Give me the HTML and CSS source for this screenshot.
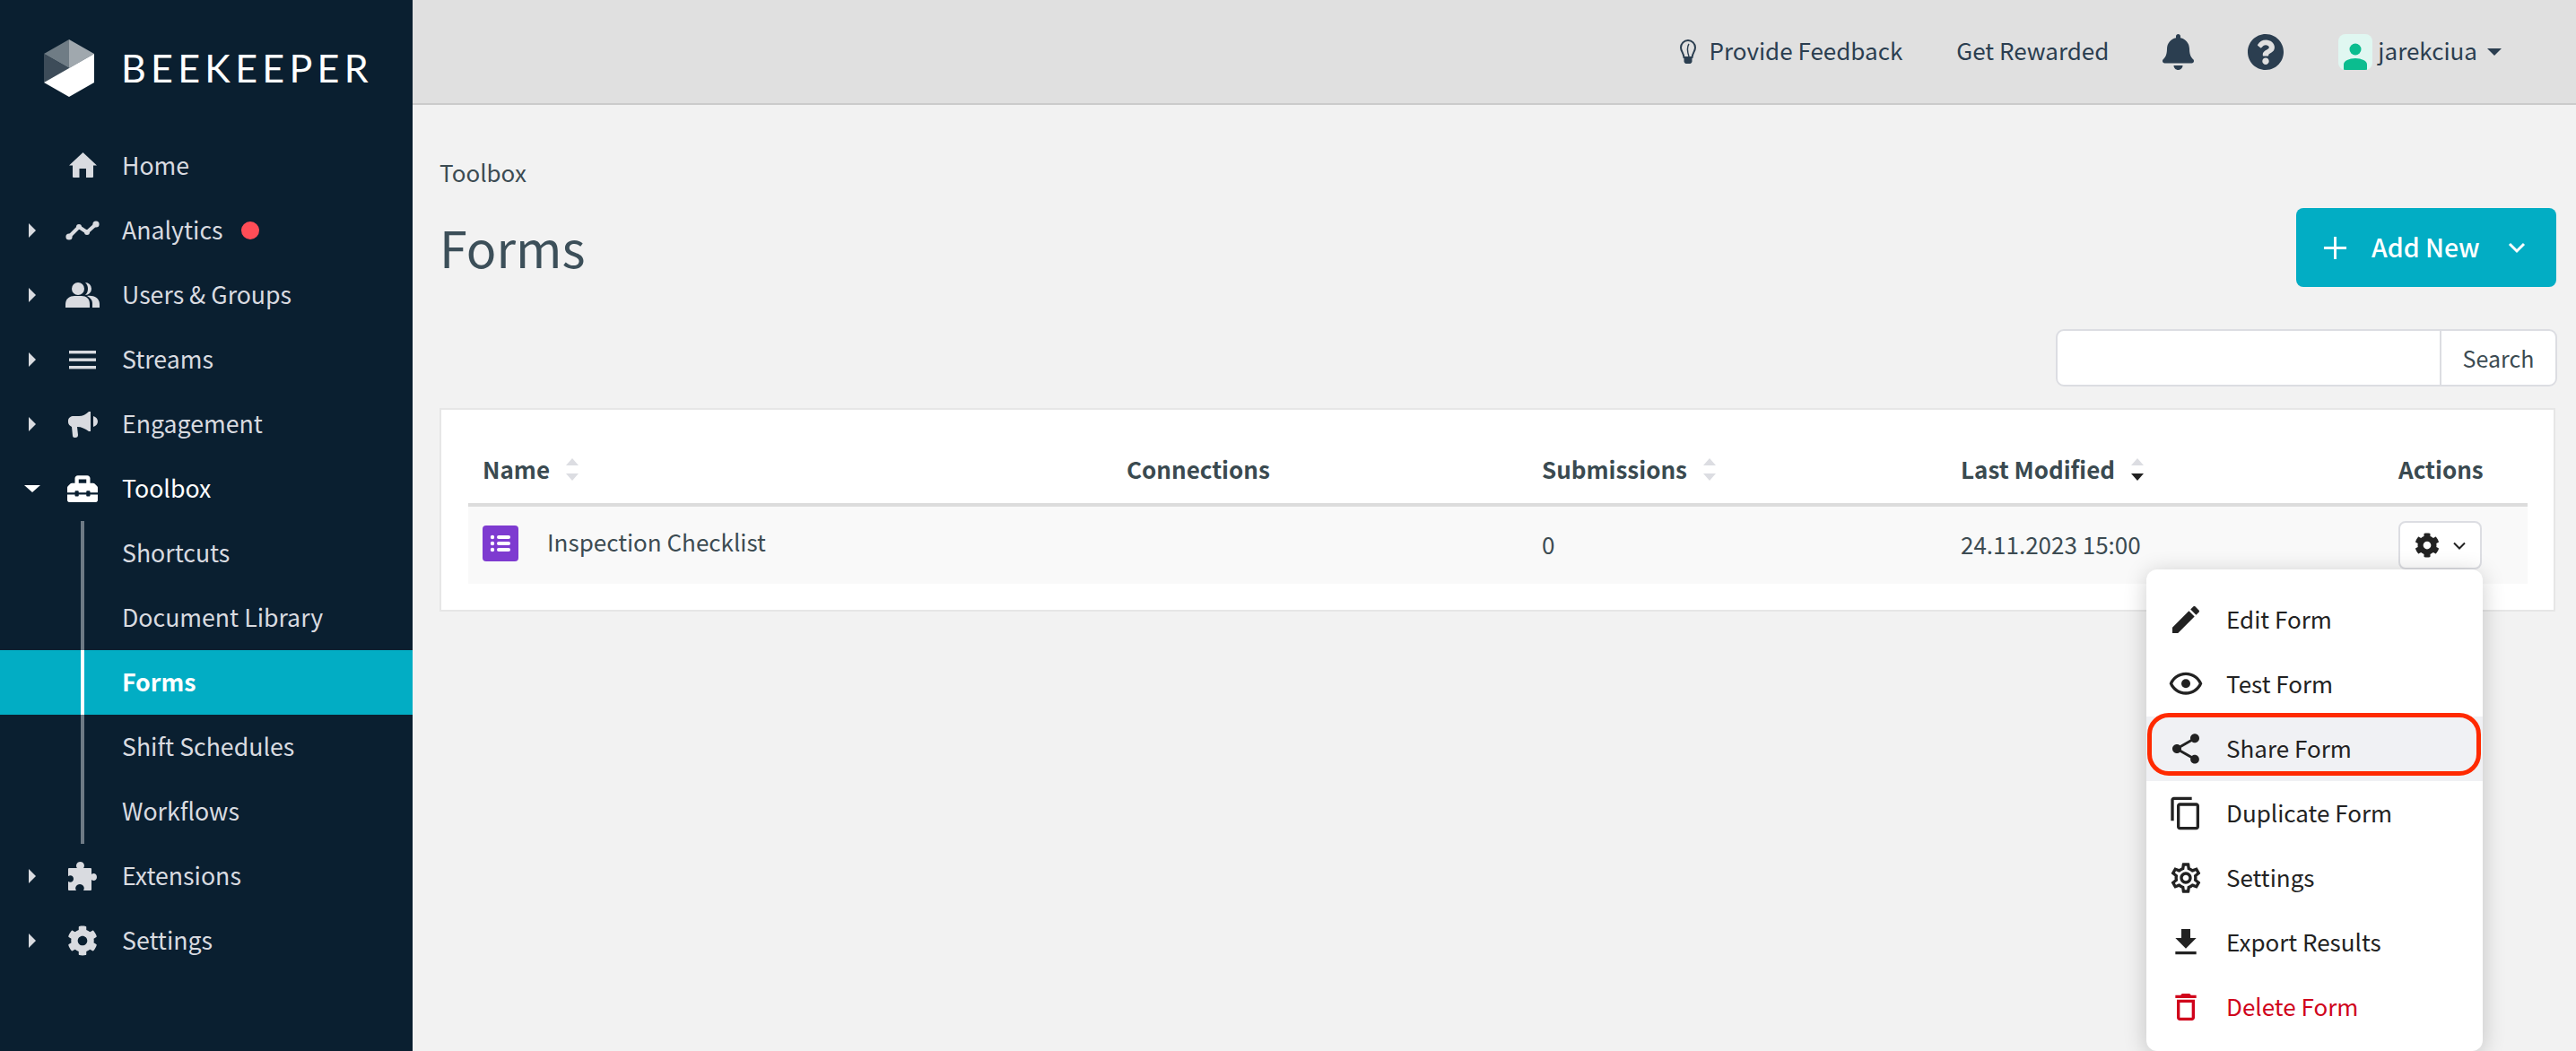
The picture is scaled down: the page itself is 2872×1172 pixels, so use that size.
FILE: index.html
```html
<!DOCTYPE html>
<html lang="en">
<head>
<meta charset="utf-8">
<title>Forms</title>
<link rel="stylesheet" href="styles.css">
</head>
<body>
<aside class="sidebar">
  <div class="brand">
    <svg class="brand-mark" viewBox="49 44 56 64" width="56" height="64">
      <polygon points="49,60 77,44 77,76" fill="#6f7c85"/>
      <polygon points="77,44 105,60 77,76" fill="#a0a8ae"/>
      <polygon points="49,60 77,76 49,92" fill="#3d4c59"/>
      <polygon points="49,92 105,60 105,92 77,108" fill="#fff"/>
    </svg>
    <span class="brand-name">BEEKEEPER</span>
  </div>
  <nav class="nav">
    <a class="nav-item"><span class="caret-slot"></span><span class="nav-icon nav-icon-home"><svg width="31" height="28" viewBox="0 0 31 28"><path d="M15.500 0L31 14.500H27V27a1 1 0 0 1-1 1H19V18H11.500V28H5a1 1 0 0 1-1-1V14.500H0z"/></svg></span><span class="nav-label">Home</span></a>
    <a class="nav-item"><span class="caret-slot"><i class="caret-right"></i></span><span class="nav-icon"><svg width="38" height="22" viewBox="0 0 38 22"><polyline points="4,18 15,7 24,13 34,4" fill="none" stroke="currentColor" stroke-width="4" stroke-linejoin="round"/><circle cx="4" cy="18" r="3.6"/><circle cx="15" cy="7" r="3"/><circle cx="24" cy="13" r="3"/><circle cx="34" cy="4" r="3.6"/></svg></span><span class="nav-label">Analytics</span><i class="dot"></i></a>
    <a class="nav-item"><span class="caret-slot"><i class="caret-right"></i></span><span class="nav-icon"><svg width="38" height="28" viewBox="0 0 38 28"><circle cx="14" cy="7" r="7"/><path d="M0 28v-4c0-6 5-9 10-9h8c5 0 9 3 9 9v4z"/><path d="M22 0a7 7 0 0 1 0 14c2-2 3-4 3-7s-1-5-3-7z"/><path d="M24 15c7-1 14 2 14 9v4h-8v-5c0-3-2-6-6-8z"/></svg></span><span class="nav-label">Users &amp; Groups</span></a>
    <a class="nav-item"><span class="caret-slot"><i class="caret-right"></i></span><span class="nav-icon"><svg width="30" height="22" viewBox="0 0 30 22"><rect y="1" width="30" height="3.4"/><rect y="9.5" width="30" height="3.4"/><rect y="18" width="30" height="3.4"/></svg></span><span class="nav-label">Streams</span></a>
    <a class="nav-item"><span class="caret-slot"><i class="caret-right"></i></span><span class="nav-icon"><svg width="33" height="29" viewBox="0 0 33 29"><path d="M23 0h2v22h-2c-4-3-8-5-13-5l0 0 1 9c0 2-1 3-3 3H7c-1 0-2-1-2-2l-1-10c-2-1-4-3-4-5V10c0-3 3-5 6-5h6c4 0 8-2 11-5z"/><path d="M28 5c3 1 5 3 5 6s-2 5-5 6z"/></svg></span><span class="nav-label">Engagement</span></a>
    <a class="nav-item nav-item-open"><span class="caret-slot"><i class="caret-down"></i></span><span class="nav-icon"><svg width="34" viewBox="0 0 512 512"><path d="M502.63 214.63l-45.25-45.25c-6-6-14.14-9.37-22.63-9.37H384V80c0-26.51-21.49-48-48-48H176c-26.51 0-48 21.49-48 48v80H77.25c-8.49 0-16.62 3.37-22.63 9.37L9.37 214.63c-6 6-9.37 14.14-9.37 22.63V320h128v-16c0-8.84 7.16-16 16-16h32c8.84 0 16 7.16 16 16v16h128v-16c0-8.84 7.16-16 16-16h32c8.84 0 16 7.16 16 16v16h128v-82.75c0-8.48-3.37-16.62-9.37-22.62zM320 160H192V96h128v64zm64 208c0 8.84-7.16 16-16 16h-32c-8.84 0-16-7.16-16-16v-16H192v16c0 8.84-7.16 16-16 16h-32c-8.84 0-16-7.16-16-16v-16H0v96c0 17.67 14.33 32 32 32h448c17.67 0 32-14.33 32-32v-96H384v16z"/></svg></span><span class="nav-label">Toolbox</span></a>
    <div class="subnav">
      <a class="sub-item">Shortcuts</a>
      <a class="sub-item">Document Library</a>
      <a class="sub-item sub-item-active">Forms</a>
      <a class="sub-item">Shift Schedules</a>
      <a class="sub-item">Workflows</a>
    </div>
    <a class="nav-item"><span class="caret-slot"><i class="caret-right"></i></span><span class="nav-icon"><svg width="32" height="32" viewBox="0 0 32 32"><path d="M1 7H10C8 5 9 0 13.500 0S19 5 17 7H25a1 1 0 0 1 1 1V14C28 12 32 13 32 17S28 22 26 20V31a1 1 0 0 1-1 1H17C19 29 17 25 13 25S7 29 9 32H1a1 1 0 0 1-1-1V22C3 24 6 22 6 19S3 14 0 16V8a1 1 0 0 1 1-1z"/></svg></span><span class="nav-label">Extensions</span></a>
    <a class="nav-item"><span class="caret-slot"><i class="caret-right"></i></span><span class="nav-icon"><svg width="34" viewBox="0 0 512 512"><path d="M487.4 315.7l-42.6-24.6c4.3-23.2 4.3-47 0-70.2l42.6-24.6c4.9-2.8 7.1-8.6 5.5-14-11.1-35.6-30-67.8-54.7-94.6-3.8-4.1-10-5.1-14.8-2.3L380.8 110c-17.9-15.4-38.5-27.3-60.8-35.1V25.8c0-5.6-3.9-10.5-9.4-11.7-36.7-8.2-74.3-7.8-109.2 0-5.5 1.2-9.4 6.1-9.4 11.7V75c-22.2 7.9-42.8 19.8-60.8 35.1L88.7 85.5c-4.9-2.8-11-1.9-14.8 2.3-24.7 26.7-43.6 58.9-54.7 94.6-1.7 5.4.6 11.2 5.5 14L67.3 221c-4.3 23.2-4.3 47 0 70.2l-42.6 24.6c-4.9 2.8-7.1 8.6-5.5 14 11.1 35.6 30 67.8 54.7 94.6 3.8 4.1 10 5.1 14.8 2.3l42.6-24.6c17.9 15.4 38.5 27.3 60.8 35.1v49.2c0 5.6 3.9 10.5 9.4 11.7 36.7 8.2 74.3 7.8 109.2 0 5.5-1.2 9.4-6.1 9.4-11.7v-49.2c22.2-7.9 42.8-19.8 60.8-35.1l42.6 24.6c4.9 2.8 11 1.9 14.8-2.3 24.7-26.7 43.6-58.9 54.7-94.6 1.5-5.5-.7-11.3-5.6-14.1zM256 336c-44.1 0-80-35.9-80-80s35.9-80 80-80 80 35.9 80 80-35.9 80-80 80z"/></svg></span><span class="nav-label">Settings</span></a>
  </nav>
</aside>

<div class="main">
  <header class="topbar">
    <a class="top-link top-feedback"><svg class="bulb" width="20" height="30" viewBox="0 0 20 30"><path d="M10 2a8 8 0 0 0-8 8c0 4 3 6 3.500 11h9C15 16 18 14 18 10a8 8 0 0 0-8-8z" fill="none" stroke="currentColor" stroke-width="2"/><path d="M11 6c-2 3-2 8 0 14" fill="none" stroke="currentColor" stroke-width="1.4"/><path d="M5.500 22h9v3.500c0 1-1 2-2 2.500h-5c-1-.5-2-1.500-2-2.500z"/></svg><span class="top-text">Provide Feedback</span></a>
    <a class="top-link top-reward"><span class="top-text">Get Rewarded</span></a>
    <svg class="top-bell" width="35" height="40" viewBox="0 0 448 512"><path d="M224 512c35.32 0 63.97-28.65 63.97-64H160.03c0 35.35 28.65 64 63.97 64zm215.39-149.71c-19.32-20.76-55.47-51.99-55.47-154.29 0-77.7-54.48-139.9-127.94-155.16V32c0-17.67-14.32-32-31.98-32s-31.98 14.33-31.98 32v20.84C118.56 68.1 64.08 130.3 64.08 208c0 102.3-36.15 133.53-55.47 154.29-6 6.45-8.66 14.16-8.61 21.71.11 16.4 12.98 32 32.1 32h383.8c19.12 0 32-15.6 32.1-32 .05-7.55-2.61-15.27-8.61-21.71z"/></svg>
    <svg class="top-help" width="40" height="40" viewBox="8 8 496 496"><path d="M504 256c0 136.997-111.043 248-248 248S8 392.997 8 256C8 119.083 119.043 8 256 8s248 111.083 248 248zM262.655 90c-54.497 0-89.255 22.957-116.549 63.758-3.536 5.286-2.353 12.415 2.715 16.258l34.699 26.31c5.205 3.947 12.621 3.008 16.665-2.122 17.864-22.658 30.113-35.797 57.303-35.797 20.429 0 45.698 13.148 45.698 32.958 0 14.976-12.363 22.667-32.534 33.976C247.128 238.528 216 254.941 216 296v4c0 6.627 5.373 12 12 12h56c6.627 0 12-5.373 12-12v-1.333c0-28.462 83.186-29.647 83.186-106.667 0-58.002-60.165-102-116.531-102zM256 338c-25.365 0-46 20.635-46 46 0 25.364 20.635 46 46 46s46-20.636 46-46c0-25.365-20.635-46-46-46z"/></svg>
    <span class="top-user">
      <span class="avatar"><svg width="38" height="40" viewBox="0 0 38 40"><circle cx="19" cy="17" r="6.500"/><path d="M6 40V34a13 7 0 0 1 26 0v6z"/></svg></span>
      <span class="top-user-name">jarekciua</span>
      <i class="user-caret"></i>
    </span>
  </header>

  <main class="content">
    <div class="breadcrumb">Toolbox</div>
    <div class="title-row">
      <h1 class="title">Forms</h1>
      <button class="add-btn">
        <svg width="27" height="27" viewBox="0 0 28 28"><path d="M14 1v26M1 14h26" stroke="#fff" stroke-width="3" fill="none"/></svg>
        <span class="add-label">Add New</span>
        <svg width="20" height="13" viewBox="0 0 20 13"><path d="M2 2l8 8 8-8" stroke="#fff" stroke-width="3" fill="none"/></svg>
      </button>
    </div>
    <div class="search-row">
      <div class="search">
        <div class="search-input"></div>
        <div class="search-btn">Search</div>
      </div>
    </div>
    <section class="card">
      <div class="table-head">
        <div class="th">Name <span class="sort"><i class="sort-up"></i><i class="sort-down"></i></span></div>
        <div class="th">Connections</div>
        <div class="th">Submissions <span class="sort"><i class="sort-up"></i><i class="sort-down"></i></span></div>
        <div class="th">Last Modified <span class="sort"><i class="sort-up"></i><i class="sort-down sort-active"></i></span></div>
        <div class="th">Actions</div>
      </div>
      <div class="table-row">
        <div class="td td-name">
          <svg class="form-icon" width="40" height="40" viewBox="0 0 40 40"><rect width="40" height="40" rx="4" fill="#7e3bd0"/><g fill="#fff"><circle cx="11" cy="13" r="2.200"/><circle cx="11" cy="20" r="2.200"/><circle cx="11" cy="27" r="2.200"/><rect x="16" y="11" width="15" height="4" rx="2"/><rect x="16" y="18" width="15" height="4" rx="2"/><rect x="16" y="25" width="15" height="4" rx="2"/></g></svg>
          <span>Inspection Checklist</span>
        </div>
        <div class="td"></div>
        <div class="td td-value">0</div>
        <div class="td td-value">24.11.2023 15:00</div>
        <div class="td td-actions">
          <div class="action-wrap">
            <button class="gear-btn">
              <svg width="28" height="28" viewBox="0 0 512 512"><path d="M487.4 315.7l-42.6-24.6c4.3-23.2 4.3-47 0-70.2l42.6-24.6c4.9-2.8 7.1-8.6 5.5-14-11.1-35.6-30-67.8-54.7-94.6-3.8-4.1-10-5.1-14.8-2.3L380.8 110c-17.9-15.4-38.5-27.3-60.8-35.1V25.8c0-5.6-3.9-10.5-9.4-11.7-36.7-8.2-74.3-7.8-109.2 0-5.5 1.2-9.4 6.1-9.4 11.7V75c-22.2 7.9-42.8 19.8-60.8 35.1L88.7 85.5c-4.9-2.8-11-1.9-14.8 2.3-24.7 26.7-43.6 58.9-54.7 94.6-1.7 5.4.6 11.2 5.5 14L67.3 221c-4.3 23.2-4.3 47 0 70.2l-42.6 24.6c-4.9 2.8-7.1 8.6-5.5 14 11.1 35.6 30 67.8 54.7 94.6 3.8 4.1 10 5.1 14.8 2.3l42.6-24.6c17.9 15.4 38.5 27.3 60.8 35.1v49.2c0 5.6 3.9 10.5 9.4 11.7 36.7 8.2 74.3 7.8 109.2 0 5.5-1.2 9.4-6.1 9.4-11.7v-49.2c22.2-7.9 42.8-19.8 60.8-35.1l42.6 24.6c4.9 2.8 11 1.9 14.8-2.3 24.7-26.7 43.6-58.9 54.7-94.6 1.5-5.5-.7-11.3-5.6-14.1zM256 336c-44.1 0-80-35.9-80-80s35.9-80 80-80 80 35.9 80 80-35.9 80-80 80z"/></svg>
              <svg width="14" height="9" viewBox="0 0 14 9"><path d="M1 1.500l6 6 6-6" stroke="#222" stroke-width="2" fill="none"/></svg>
            </button>
            <ul class="menu">
              <li class="menu-item"><svg width="40" height="40" viewBox="0 0 24 24"><path d="M3 17.250V21h3.750L17.810 9.940l-3.750-3.750L3 17.250zM20.710 7.040c.39-.39.39-1.020 0-1.410l-2.340-2.340c-.39-.39-1.020-.39-1.410 0l-1.830 1.830 3.750 3.750 1.830-1.830z"/></svg><span class="menu-text">Edit Form</span></li>
              <li class="menu-item"><svg width="40" height="40" viewBox="0 0 24 24"><path d="M12 6c3.790 0 7.170 2.130 8.820 5.500C19.170 14.870 15.790 17 12 17s-7.170-2.130-8.820-5.500C4.830 8.130 8.210 6 12 6m0-2C7 4 2.730 7.110 1 11.500 2.730 15.890 7 19 12 19s9.270-3.110 11-7.500C21.270 7.110 17 4 12 4z"/><circle cx="12" cy="11.500" r="3"/></svg><span class="menu-text">Test Form</span></li>
              <li class="menu-item menu-item-hover"><svg width="40" height="40" viewBox="0 0 24 24"><path d="M18 16.080c-.76 0-1.440.3-1.960.77L8.910 12.700c.05-.23.09-.46.09-.7s-.04-.47-.09-.7l7.050-4.110c.54.5 1.250.81 2.040.81 1.660 0 3-1.340 3-3s-1.340-3-3-3-3 1.340-3 3c0 .24.04.47.09.7L8.040 9.810C7.500 9.310 6.790 9 6 9c-1.660 0-3 1.340-3 3s1.340 3 3 3c.79 0 1.500-.31 2.040-.81l7.120 4.160c-.05.21-.08.43-.08.65 0 1.610 1.310 2.920 2.920 2.920s2.920-1.310 2.920-2.920-1.310-2.920-2.920-2.920z"/></svg><span class="menu-text">Share Form</span><span class="highlight"></span></li>
              <li class="menu-item"><svg width="40" height="40" viewBox="0 0 24 24"><path d="M16 1H4c-1.100 0-2 .9-2 2v14h2V3h12V1zm3 4H8c-1.100 0-2 .9-2 2v14c0 1.100.9 2 2 2h11c1.100 0 2-.9 2-2V7c0-1.100-.9-2-2-2zm0 16H8V7h11v14z"/></svg><span class="menu-text">Duplicate Form</span></li>
              <li class="menu-item"><svg width="40" height="40" viewBox="0 0 24 24"><path d="M19.430 12.980c.04-.32.07-.64.07-.98 0-.34-.03-.66-.07-.98l2.110-1.650c.19-.15.24-.42.12-.64l-2-3.460c-.09-.16-.26-.25-.44-.25-.06 0-.12.01-.17.03l-2.490 1c-.52-.4-1.080-.73-1.690-.98l-.38-2.650C14.460 2.180 14.250 2 14 2h-4c-.25 0-.46.18-.49.42l-.38 2.650c-.61.25-1.170.59-1.690.98l-2.490-1c-.06-.02-.12-.03-.18-.03-.17 0-.34.09-.43.25l-2 3.460c-.13.22-.07.49.12.64l2.110 1.650c-.04.32-.07.65-.07.98 0 .33.03.66.07.98l-2.110 1.650c-.19.15-.24.42-.12.64l2 3.460c.09.16.26.25.44.25.06 0 .12-.01.17-.03l2.490-1c.52.4 1.080.73 1.690.98l.38 2.650c.03.24.24.42.49.42h4c.25 0 .46-.18.49-.42l.38-2.650c.61-.25 1.170-.59 1.690-.98l2.490 1c.06.02.12.03.18.03.17 0 .34-.09.43-.25l2-3.460c.12-.22.07-.49-.12-.64l-2.110-1.650zm-1.980-1.710c.04.31.05.52.05.73 0 .21-.02.43-.05.73l-.14 1.130.89.7 1.080.84-.7 1.210-1.270-.51-1.040-.42-.9.68c-.43.32-.84.56-1.250.73l-1.060.43-.16 1.130-.2 1.350h-1.400l-.19-1.350-.16-1.130-1.060-.43c-.43-.18-.83-.41-1.230-.71l-.91-.7-1.060.43-1.270.51-.7-1.210 1.080-.84.89-.7-.14-1.130c-.03-.31-.05-.54-.05-.74s.02-.43.05-.73l.14-1.130-.89-.7-1.080-.84.7-1.210 1.270.51 1.040.42.9-.68c.43-.32.84-.56 1.250-.73l1.060-.43.16-1.130.2-1.350h1.390l.19 1.350.16 1.130 1.060.43c.43.18.83.41 1.230.71l.91.7 1.060-.43 1.270-.51.7 1.210-1.070.85-.89.7.14 1.130zM12 8c-2.210 0-4 1.790-4 4s1.790 4 4 4 4-1.790 4-4-1.790-4-4-4zm0 6c-1.100 0-2-.9-2-2s.9-2 2-2 2 .9 2 2-.9 2-2 2z"/></svg><span class="menu-text">Settings</span></li>
              <li class="menu-item"><svg width="40" height="40" viewBox="0 0 24 24"><path d="M19 9h-4V3H9v6H5l7 7 7-7zM5 18v2h14v-2H5z"/></svg><span class="menu-text">Export Results</span></li>
              <li class="menu-item menu-item-danger"><svg width="40" height="40" viewBox="0 0 24 24"><path d="M6 19c0 1.100.9 2 2 2h8c1.100 0 2-.9 2-2V7H6v12zM8 9h8v10H8V9zm7.500-5l-1-1h-5l-1 1H5v2h14V4z"/></svg><span class="menu-text">Delete Form</span></li>
            </ul>
          </div>
        </div>
      </div>
    </section>
  </main>
</div>
</body>
</html>
```
FILE: styles.css
```css
* { box-sizing: border-box; }
html, body { margin: 0; height: 100%; }
body {
  display: flex;
  width: 2872px;
  height: 1172px;
  overflow: hidden;
  background: #f2f2f2;
  font-family: "Noto Sans CJK JP", "Noto Sans", sans-serif;
  font-size: 26.7px;
  color: #3c4b52;
}

/* Sidebar */
.sidebar { flex: 0 0 460px; background: #0a1f30; color: #d9dbe0; }
.brand { height: 149px; display: flex; align-items: flex-start; padding: 44px 0 0 49px; }
.brand-name {
  margin: 7px 0 0 30px;
  font-family: Lato, sans-serif;
  font-weight: 400;
  font-size: 43px;
  line-height: 50px;
  letter-spacing: 5.3px;
  color: #fff;
}
.nav-item { display: flex; align-items: center; height: 72px; padding-left: 27px; }
.caret-slot { flex: 0 0 18px; display: flex; justify-content: center; }
.caret-right { width: 0; height: 0; border-style: solid; border-width: 8px 0 8px 8px; border-color: transparent transparent transparent #d9dbe0; }
.caret-down { width: 0; height: 0; border-style: solid; border-width: 8px 9px 0; border-color: #fff transparent transparent; }
.nav-icon { flex: 0 0 40px; margin-left: 27px; display: flex; justify-content: center; align-items: center; }
.nav-icon svg { fill: currentColor; display: block; }
.nav-icon-home { margin-bottom: 3px; }
.nav-label { margin-left: 24px; margin-bottom: 3px; line-height: 36px; }
.nav-item-open { color: #fff; }
.dot { width: 20px; height: 20px; margin-left: 20px; border-radius: 50%; background: #ff4d57; }
.subnav { position: relative; }
.subnav::before { content: ""; position: absolute; left: 90px; top: 0; width: 4px; height: 360px; background: #6e7a85; z-index: 1; }
.sub-item { position: relative; display: block; height: 72px; line-height: 69px; padding-left: 136px; }
.sub-item-active { background: #02adc4; color: #fff; font-weight: 700; }
.sub-item-active::before { content: ""; position: absolute; left: 90px; top: 0; width: 4px; height: 72px; background: #fff; z-index: 2; }

/* Top bar */
.main { flex: 1; min-width: 0; display: flex; flex-direction: column; }
.topbar {
  flex: 0 0 117px;
  display: flex;
  align-items: center;
  padding-right: 83px;
  background: #e0e0e0;
  border-bottom: 2px solid #cbcbcb;
  color: #2b3e50;
}
.top-link { display: flex; align-items: center; line-height: 36px; font-size: 26px; }
.top-text { margin-bottom: 4px; }
.top-feedback { margin-left: auto; }
.bulb { fill: currentColor; margin-right: 14px; }
.top-reward { margin-left: 60px; }
.top-bell { margin-left: 60px; fill: #2b3e50; }
.top-help { margin-left: 60px; fill: #2b3e50; }
.top-user { margin-left: 61px; display: flex; align-items: center; }
.avatar { width: 38px; height: 40px; border-radius: 8px; overflow: hidden; background: #e0f7f1; }
.avatar svg { display: block; fill: #0bbd8f; }
.top-user-name { margin: 0 0 4px 6px; line-height: 36px; font-size: 26px; }
.user-caret { width: 0; height: 0; margin-left: 11px; border-style: solid; border-width: 8px 8px 0; border-color: #2b3e50 transparent transparent; }

/* Page content */
.content { flex: 1; padding: 57px 22px 0 30px; }
.breadcrumb { line-height: 36px; font-size: 26px; }
.title-row { margin-top: 22px; display: flex; justify-content: space-between; align-items: center; }
.title { margin: 0 0 2px; font-size: 55.6px; font-weight: 400; line-height: 86px; color: #3c4f59; }
.add-btn {
  width: 290px;
  height: 88px;
  display: flex;
  align-items: center;
  padding: 0 34px 0 30px;
  border: 0;
  border-radius: 8px;
  background: #02adc4;
  color: #fff;
  font: inherit;
}
.add-label { margin: 0 auto 2px 27px; font-size: 28.5px; font-weight: 500; line-height: 36px; }
.search-row { margin-top: 47px; display: flex; justify-content: flex-end; }
.search { width: 559px; height: 64px; margin-right: -1px; display: flex; background: #fff; border: 2px solid #dcdde2; border-radius: 9px; }
.search-input { flex: 1; }
.search-btn { width: 129px; border-left: 2px solid #dcdde2; text-align: center; line-height: 60px; font-size: 25px; }
.card { margin-top: 24px; width: 2359px; height: 227px; padding: 32px 29px 0 30px; background: #fff; border: 2px solid #e6e6e6; }
.table-head, .table-row { display: grid; grid-template-columns: 734px 463px 467px 488px 144px; }
.table-head { height: 76px; border-bottom: 4px solid #dcdcdc; align-items: center; }
.th { display: flex; align-items: center; gap: 14px; padding-left: 16px; margin-top: -4px; font-weight: 700; font-size: 26px; line-height: 36px; color: #3a4a50; }
.th:nth-child(n+2) { padding-left: 0; }
.sort { display: flex; flex-direction: column; gap: 9px; margin-left: 4px; }
.sort-up, .sort-down { width: 0; height: 0; border-style: solid; border-color: transparent; border-width: 0 7px; }
.sort-up { border-bottom: 8px solid #dcdde2; }
.sort-down { border-top: 8px solid #dcdde2; }
.sort-down.sort-active { border-top-color: #222; }
.table-row { height: 86px; background: #f9f9f9; }
.td { font-size: 26px; line-height: 36px; }
.td-name { display: flex; align-items: center; padding: 20px 0 0 16px; height: 62px; }
.td-name span { margin-left: 32px; margin-top: -4px; }
.form-icon { display: block; flex: none; }
.td-value { padding-top: 24px; }
.td-actions { padding-top: 16px; }
.action-wrap { position: relative; width: 93px; }
.gear-btn {
  width: 93px;
  height: 54px;
  display: flex;
  align-items: center;
  justify-content: center;
  gap: 15px;
  padding: 0;
  background: #fff;
  border: 2px solid #dcdde2;
  border-radius: 8px;
}
.gear-btn svg { fill: #222; display: block; }
.menu {
  position: absolute;
  top: 100%;
  right: -1px;
  z-index: 5;
  width: 375px;
  height: 537px;
  margin: 0;
  padding: 20px 0 0;
  list-style: none;
  background: #fff;
  border-radius: 12px;
  box-shadow: 0 4px 26px rgba(0, 0, 0, .2);
  color: #222;
}
.menu-item { position: relative; display: flex; align-items: center; height: 72px; padding-left: 24px; }
.menu-item svg { flex: none; margin-right: 26px; fill: #222; display: block; }
.menu-text { margin: 0 0 3px -1px; }
.menu-item-hover { background: #f0f1f4; }
.menu-item-danger { color: #d0021b; }
.menu-item-danger svg { fill: #d0021b; }
.highlight { position: absolute; left: 1px; right: 2px; top: -4px; height: 70px; border: 5px solid #ff2a00; border-radius: 24px; }
```
